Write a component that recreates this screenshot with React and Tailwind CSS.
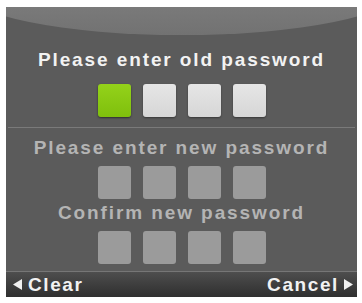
import React from 'react'

const font = { fontFamily: '"Liberation Sans", Arial, sans-serif' }

function Boxes({ kind }) {
  const boxes = [0, 1, 2, 3]
  return (
    <div className="flex justify-center gap-[12px]">
      {boxes.map((i) => {
        let cls = 'bg-[#9b9b9b]'
        if (kind === 'old') {
          cls = i === 0
            ? 'bg-gradient-to-b from-[#94d21a] to-[#7fbf0c] shadow-[0_1px_2px_rgba(0,0,0,0.5)]'
            : 'bg-gradient-to-b from-[#e6e6e6] to-[#d6d6d6] shadow-[0_1px_2px_rgba(0,0,0,0.4)]'
        }
        return <div key={i} className={`w-[33px] h-[33px] rounded-[3px] ${cls}`} />
      })}
    </div>
  )
}

export default function App() {
  return (
    <div className="w-[362px] h-[303px] bg-white pt-[7px] pl-[6px]" style={font}>
      <div className="relative w-[351px] h-[290px] bg-[#5b5b5b] flex flex-col overflow-hidden">
        <div className="absolute left-[-40px] right-[-40px] top-[-60px] h-[88px] rounded-[50%] bg-gradient-to-b from-[#8a8a8a] to-[#727272]" />
        <div className="relative flex flex-col pt-[42px]">
          <p className="text-center text-[19px] leading-[22px] font-bold tracking-[1.9px] text-[#f2f2f2]">Please enter old password</p>
          <div className="mt-[13px]"><Boxes kind="old" /></div>
          <div className="mt-[10px] mx-[2px] h-[1px] bg-[#7a7a7a]" />
          <p className="mt-[9px] text-center text-[19px] leading-[22px] font-bold tracking-[1.9px] text-[#b4b4b4]">Please enter new password</p>
          <div className="mt-[7px]"><Boxes kind="new" /></div>
          <p className="mt-[3px] text-center text-[19px] leading-[22px] font-bold tracking-[1.9px] text-[#b4b4b4]">Confirm new password</p>
          <div className="mt-[7px]"><Boxes kind="new" /></div>
        </div>
        <div className="mt-auto h-[26px] border-t border-[#767676] bg-gradient-to-b from-[#4e4e4e] to-[#2f2f2f] flex items-center justify-between pl-[7px] pr-[4px]">
          <div className="flex items-center gap-[5px]">
            <svg width="10" height="11" viewBox="0 0 10 11"><polygon points="9,0 9,11 0,5.5" fill="#f0f0f0" /></svg>
            <span className="text-[19px] leading-[22px] font-bold tracking-[1.6px] text-[#f2f2f2]">Clear</span>
          </div>
          <div className="flex items-center gap-[4px]">
            <span className="text-[19px] leading-[22px] font-bold tracking-[1.6px] text-[#f2f2f2]">Cancel</span>
            <svg width="10" height="11" viewBox="0 0 10 11"><polygon points="1,0 1,11 10,5.5" fill="#f0f0f0" /></svg>
          </div>
        </div>
      </div>
    </div>
  )
}
